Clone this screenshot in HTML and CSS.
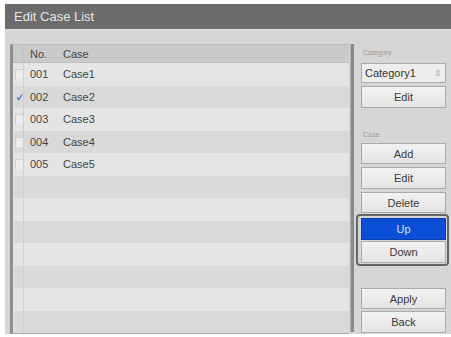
FILE: index.html
```html
<!DOCTYPE html>
<html>
<head>
<meta charset="utf-8">
<link rel="stylesheet" href="styles.css">
</head>
<body>
<div class="window">
  <div class="titlebar">Edit Case List</div>
  <div class="content">
    <div class="list">
      <div class="row header"><span class="chk"></span><span class="no">No.</span><span class="case">Case</span></div>
      <div class="row light"><span class="chk"><i class="box"></i></span><span class="no">001</span><span class="case">Case1</span></div>
      <div class="row dark"><span class="chk"><svg class="tick" width="10" height="10" viewBox="0 0 10 10"><path d="M1.5 5.5 L4 8.5 L8.5 1.5" fill="none" stroke="#3a6ed8" stroke-width="1.7"/></svg></span><span class="no">002</span><span class="case">Case2</span></div>
      <div class="row light"><span class="chk"><i class="box"></i></span><span class="no">003</span><span class="case">Case3</span></div>
      <div class="row dark"><span class="chk"><i class="box"></i></span><span class="no">004</span><span class="case">Case4</span></div>
      <div class="row light"><span class="chk"><i class="box"></i></span><span class="no">005</span><span class="case">Case5</span></div>
      <div class="row dark"><span class="chk"></span></div>
      <div class="row light"><span class="chk"></span></div>
      <div class="row dark"><span class="chk"></span></div>
      <div class="row light"><span class="chk"></span></div>
      <div class="row dark"><span class="chk"></span></div>
      <div class="row light"><span class="chk"></span></div>
      <div class="row dark last"><span class="chk"></span></div>
    </div>
    <div class="divider"></div>
    <div class="side">
      <div class="label">Category</div>
      <div class="select"><span>Category1</span><span class="arrows">⇳</span></div>
      <div class="btn b22 mt3">Edit</div>
      <div class="label mt22">Case</div>
      <div class="btn b21 mt3">Add</div>
      <div class="btn b22 mt3">Edit</div>
      <div class="btn b21 mt3">Delete</div>
      <div class="group">
        <div class="btn b22 up">Up</div>
        <div class="btn b22 mt1">Down</div>
      </div>
      <div class="btn b21 mt22">Apply</div>
      <div class="btn b22 mt2">Back</div>
    </div>
  </div>
</div>
</body>
</html>
```
FILE: styles.css
```css
html, body {
  margin: 0;
  padding: 0;
  background: #ffffff;
}
body {
  font-family: "Liberation Sans", Arial, sans-serif;
  color: #454545;
  width: 451px;
  height: 337px;
  overflow: hidden;
}
.window {
  margin: 4px 0 0 5px;
  width: 446px;
  height: 330px;
  background: #d6d6d6;
  display: flex;
  flex-direction: column;
}
.titlebar {
  height: 25px;
  background: #6b6b6b;
  color: #e6e6e6;
  font-size: 13px;
  line-height: 25px;
  padding-left: 9px;
  flex: none;
}
.content {
  display: flex;
  padding: 14px 0 0 5px;
  border-top: 1px solid #e2e2e2;
  flex: 1;
}
.list {
  width: 336px;
  height: 288px;
  border-left: 3px solid #8e8e8e;
  border-top: 1px solid #b8b8b8;
  border-bottom: 1px solid #a8a8a8;
  display: flex;
  flex-direction: column;
  overflow: hidden;
}
.row {
  display: flex;
  align-items: center;
  height: 22.5px;
  flex: none;
  font-size: 11px;
}
.row.header {
  height: 18px;
  background: #cacaca;
  border-bottom: 1px solid #bcbcbc;
  box-sizing: border-box;
}
.row.light { background: #e5e5e5; }
.row.dark { background: #d9d9d9; }
.chk {
  width: 9px;
  align-self: stretch;
  border-left: 1px solid #e6e6e6;
  border-right: 1px solid #cfcfcf;
  display: flex;
  align-items: center;
  justify-content: center;
  flex: none;
}
.header .chk { border-color: #c4c4c4; }
.box {
  display: block;
  width: 7px;
  height: 9px;
  background: #ececec;
  border-left: 1px solid #d0d0d0;
  border-top: 1px solid #d0d0d0;
}
.tick { margin-left: 2px; }
.no {
  margin-left: 6px;
  width: 33px;
}
.divider {
  width: 3px;
  height: 288px;
  margin-left: 1px;
  background: #8a8a8a;
  border-left: 1px solid #b4b4b4;
}
.side {
  width: 85px;
  padding-left: 7px;
  display: flex;
  flex-direction: column;
}
.label {
  margin-top: 4px;
  height: 10px;
  font-size: 7px;
  line-height: 10px;
  color: #9a9a9a;
  padding-left: 2px;
}
.label.mt22 { margin-top: 22px; }
.select {
  margin-top: 5px;
  height: 20px;
  box-sizing: border-box;
  background: #ededed;
  border: 1px solid #a9a9a9;
  display: flex;
  align-items: center;
  justify-content: space-between;
  padding: 0 3px 0 3px;
  font-size: 11px;
  color: #333;
}
.arrows {
  font-size: 9px;
  color: #999;
}
.btn {
  box-sizing: border-box;
  background: linear-gradient(#f2f2f2, #e4e4e4);
  border: 1px solid #ababab;
  font-size: 11px;
  color: #3a3a3a;
  display: flex;
  align-items: center;
  justify-content: center;
  flex: none;
}
.b21 { height: 21px; }
.b22 { height: 22px; }
.mt1 { margin-top: 1px; }
.mt2 { margin-top: 2px; }
.mt3 { margin-top: 3px; }
.mt22 { margin-top: 22px; }
.group {
  margin: 1px -3px 0 -5px;
  padding: 2px 1px 1px 3px;
  border: 2px solid #666;
  border-radius: 4px;
  display: flex;
  flex-direction: column;
}
.btn.up {
  background: #0a4fd6;
  border-color: #0a3fae;
  color: #cfe0ff;
}
```
